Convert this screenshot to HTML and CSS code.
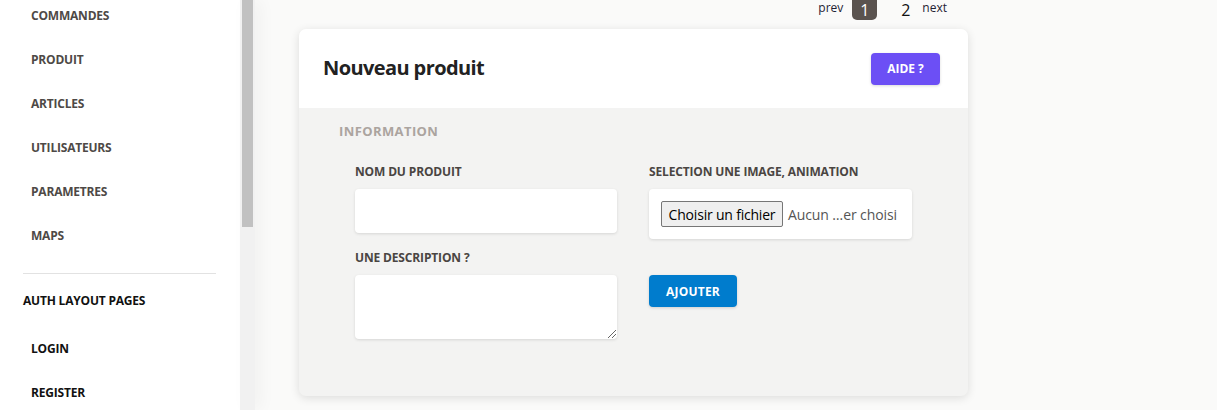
FILE: index.html
```html
<!DOCTYPE html>
<html lang="fr">
<head>
<meta charset="utf-8">
<title>Nouveau produit</title>
<link rel="stylesheet" href="styles.css">
</head>
<body>
<div class="layout">
  <aside class="sidebar">
    <nav class="nav">
      <a class="nav-item">COMMANDES</a>
      <a class="nav-item">PRODUIT</a>
      <a class="nav-item">ARTICLES</a>
      <a class="nav-item">UTILISATEURS</a>
      <a class="nav-item">PARAMETRES</a>
      <a class="nav-item">MAPS</a>
      <hr class="divider">
      <div class="nav-heading">AUTH LAYOUT PAGES</div>
      <a class="nav-item dark">LOGIN</a>
      <a class="nav-item dark">REGISTER</a>
    </nav>
  </aside>
  <div class="scrollbar"><div class="thumb"></div></div>
  <main class="main">
    <div class="pager">
      <span class="pg-text">prev</span>
      <span class="pg-num active">1</span>
      <span class="pg-num">2</span>
      <span class="pg-text">next</span>
    </div>
    <section class="card">
      <header class="card-head">
        <h1 class="title">Nouveau produit</h1>
        <button class="btn btn-purple">AIDE ?</button>
      </header>
      <div class="card-body">
        <h2 class="section">INFORMATION</h2>
        <div class="form-grid">
          <div class="field">
            <label class="label">NOM DU PRODUIT</label>
            <div class="input"></div>
          </div>
          <div class="field">
            <label class="label">SELECTION UNE IMAGE, ANIMATION</label>
            <div class="filebox">
              <span class="file-btn">Choisir un fichier</span>
              <span class="file-name">Aucun …er choisi</span>
            </div>
          </div>
          <div class="field">
            <label class="label">UNE DESCRIPTION ?</label>
            <div class="textarea"><span class="grip"></span></div>
          </div>
          <div class="field action">
            <button class="btn btn-blue">AJOUTER</button>
          </div>
        </div>
      </div>
    </section>
  </main>
</div>
</body>
</html>
```
FILE: styles.css
```css
* { box-sizing: border-box; }
html, body { margin: 0; padding: 0; height: 100%; overflow: hidden; }
body {
  font-family: "Open Sans", "Noto Sans", sans-serif;
  background: #fafaf9;
}
.layout { display: flex; height: 410px; }
.sidebar {
  width: 240px;
  background: #fff;
  flex: none;
}
.nav { display: flex; flex-direction: column; margin-top: -7px; }
.nav-item {
  height: 44px;
  display: flex;
  align-items: center;
  padding-left: 31px;
  font-size: 12px;
  font-weight: 700;
  color: #4e4946;
  letter-spacing: -0.2px;
}
.nav-item.dark { color: #111; }
.divider {
  border: 0;
  border-top: 1px solid #e2e2e2;
  margin: 16px 24px 0 23px;
  height: 0;
}
.nav-heading {
  height: 52px;
  display: flex;
  align-items: center;
  padding-left: 23px;
  font-size: 12px;
  font-weight: 700;
  color: #111;
  letter-spacing: -0.2px;
}
.scrollbar {
  width: 15px;
  flex: none;
  background: #f1f1f1;
  padding: 0 2px;
  box-shadow: 6px 0 16px rgba(0,0,0,0.04);
}
.thumb { height: 227px; background: #c1c1c1; }
.main {
  flex: 1;
  padding-left: 44px;
}
.pager {
  width: 669px;
  display: flex;
  justify-content: flex-end;
  align-items: flex-start;
  padding-right: 17px;
  height: 20px;
  margin-bottom: 9px;
}
.pg-text { font-size: 12px; line-height: 16px; color: #1f2233; margin: 0 4px; }
.pg-num {
  font-size: 16px;
  color: #111;
  width: 25px;
  height: 20px;
  display: flex;
  align-items: center;
  justify-content: center;
  margin: 0 4px 0 5px;
  line-height: 18px;
}
.pg-num.active { background: #5a534f; color: #fff; border-radius: 0 0 5px 5px; }
.pg-num + .pg-num { margin-left: 12px; margin-right: 0; }
.card {
  width: 669px;
  border-radius: 7px;
  background: #f3f3f2;
  box-shadow: 0 2px 10px rgba(0,0,0,0.12);
  overflow: hidden;
}
.card-head {
  height: 79px;
  background: #fff;
  display: flex;
  align-items: center;
  justify-content: space-between;
  padding: 0 28px 0 24px;
}
.title {
  margin: 0;
  font-size: 20px;
  font-weight: 700;
  color: #222;
  letter-spacing: -0.6px;
  padding-bottom: 3px;
}
.btn {
  border: 0;
  font-family: inherit;
  font-weight: 700;
  font-size: 12px;
  color: #fff;
  border-radius: 4px;
  box-shadow: 0 1px 3px rgba(0,0,0,0.15);
}
.btn-purple { background: #6c4ff5; width: 69px; height: 32px; }
.btn-blue { background: #007ccd; width: 88px; height: 32px; letter-spacing: 0.2px; }
.card-body { padding: 14px 56px 57px 40px; }
.section {
  margin: 0 0 23px;
  font-size: 13px;
  font-weight: 700;
  color: #aba49f;
  line-height: 18px;
  letter-spacing: 0.4px;
}
.form-grid {
  display: grid;
  grid-template-columns: 262px 263px;
  column-gap: 32px;
  row-gap: 10px;
  padding-left: 16px;
}
.field { display: flex; flex-direction: column; }
.label {
  font-size: 12px;
  font-weight: 700;
  color: #4a4542;
  line-height: 18px;
  margin-bottom: 8px;
  letter-spacing: -0.15px;
}
.input {
  height: 44px;
  background: #fff;
  border-radius: 4px;
  box-shadow: 0 1px 3px rgba(0,0,0,0.12);
}
.textarea {
  height: 64px;
  background: #fff;
  border-radius: 4px;
  box-shadow: 0 1px 3px rgba(0,0,0,0.12);
  position: relative;
}
.grip {
  position: absolute;
  right: 1px;
  bottom: 1px;
  width: 8px;
  height: 8px;
  background: linear-gradient(135deg, transparent 45%, #666 45%, #666 55%, transparent 55%, transparent 70%, #666 70%, #666 80%, transparent 80%);
}
.filebox {
  height: 50px;
  background: #fff;
  border-radius: 4px;
  box-shadow: 0 1px 3px rgba(0,0,0,0.12);
  display: flex;
  align-items: center;
  padding-left: 12px;
}
.file-btn {
  font-size: 14px;
  color: #000;
  background: #efefef;
  border: 1px solid #767676;
  border-radius: 2px;
  height: 26px;
  width: 122px;
  display: flex;
  align-items: center;
  justify-content: center;
  letter-spacing: -0.2px;
}
.file-name { font-size: 14px; color: #555; margin-left: 5px; letter-spacing: -0.1px; }
.action { padding-top: 26px; }
```
